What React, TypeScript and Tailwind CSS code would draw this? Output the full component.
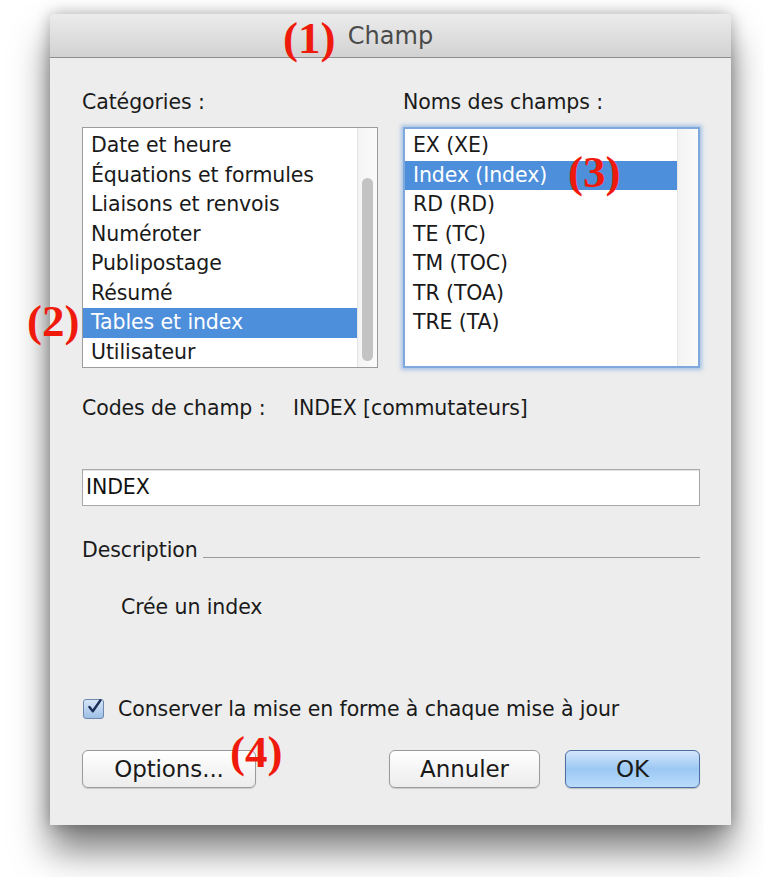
import React from "react";

const categories = [
  "Date et heure",
  "Équations et formules",
  "Liaisons et renvois",
  "Numéroter",
  "Publipostage",
  "Résumé",
  "Tables et index",
  "Utilisateur",
];

const fieldNames = [
  "EX (XE)",
  "Index (Index)",
  "RD (RD)",
  "TE (TC)",
  "TM (TOC)",
  "TR (TOA)",
  "TRE (TA)",
];

const font = { fontFamily: '"DejaVu Sans", "Liberation Sans", sans-serif' };

function Callout({ n, className }: { n: number; className: string }) {
  return (
    <span
      className={`absolute font-bold text-[#f01a0c] text-[45px] leading-none tracking-normal ${className}`}
      style={{ fontFamily: '"Liberation Serif", "DejaVu Serif", serif' }}
    >
      ({n})
    </span>
  );
}

function ListRow({ label, selected }: { label: string; selected: boolean }) {
  return (
    <div
      className={`h-[29.5px] pl-[8px] flex items-center whitespace-nowrap ${
        selected ? "bg-[#4e8fdb] text-white" : "text-[#1a1a1a]"
      }`}
    >
      {label}
    </div>
  );
}

const plainButton =
  "h-[38px] rounded-[6px] border border-[#9a9a9a] bg-gradient-to-b from-white to-[#ececec] shadow-[0_1px_1px_rgba(0,0,0,0.15)] text-[#1a1a1a] text-[23px]";

export default function App() {
  return (
    <div className="bg-white w-[764px] h-[877px] pt-[14px] pl-[50px] text-[20.5px] tracking-[-0.1px]" style={font}>
      <div className="relative w-[681px] h-[811px] bg-[#ededed] rounded-t-[5px] shadow-[0_26px_36px_rgba(0,0,0,0.5),0_0_16px_rgba(0,0,0,0.3)] flex flex-col">
        {/* title bar */}
        <div className="h-[44px] rounded-t-[5px] bg-gradient-to-b from-[#ececec] to-[#d2d2d2] border-b border-[#8e8e8e] flex items-center justify-center">
          <span className="text-[24px] text-[#4a4a4a] tracking-normal">Champ</span>
        </div>

        <div className="flex flex-col pl-[32px] pr-[31px]">
          {/* lists */}
          <div className="flex gap-[25px] mt-[32px]">
            <div className="w-[296px]">
              <div className="h-[24px] flex items-center text-[#1a1a1a]">Catégories :</div>
              <div className="mt-[13px] h-[241px] bg-white border border-[#9c9c9c] flex">
                <div className="flex-1 pt-[3px]">
                  {categories.map((c) => (
                    <ListRow key={c} label={c} selected={c === "Tables et index"} />
                  ))}
                </div>
                <div className="w-[20px] bg-gradient-to-r from-[#f4f4f4] to-[#fbfbfb] border-l border-[#e4e4e4] flex flex-col px-[4px] pt-[50px] pb-[6px]">
                  <div className="flex-1 rounded-full bg-[#c3c3c3]" />
                </div>
              </div>
            </div>

            <div className="w-[297px]">
              <div className="h-[24px] flex items-center text-[#1a1a1a]">Noms des champs :</div>
              <div className="mt-[13px] h-[241px] bg-white border-2 border-[#7fa9dc] shadow-[0_0_4px_2px_rgba(110,160,225,0.55)] flex">
                <div className="flex-1 pt-[2px]">
                  {fieldNames.map((f) => (
                    <ListRow key={f} label={f} selected={f === "Index (Index)"} />
                  ))}
                </div>
                <div className="w-[21px] bg-gradient-to-r from-[#f3f3f3] to-[#fafafa] border-l border-[#e6e6e6]" />
              </div>
            </div>
          </div>

          {/* field code */}
          <div className="flex items-center mt-[28px] h-[24px] text-[#1a1a1a]">
            <span className="w-[211px]">Codes de champ :</span>
            <span>INDEX [commutateurs]</span>
          </div>

          <div className="mt-[49px] h-[37px] bg-white border border-[#a9a9a9] shadow-[inset_0_1px_1px_rgba(0,0,0,0.12)] flex items-center pl-[3px] text-[#111]">
            INDEX
          </div>

          {/* description */}
          <div className="flex items-center gap-[5px] mt-[32px] h-[24px] text-[#1a1a1a]">
            <span>Description</span>
            <div className="flex-1 h-px bg-[#9a9a9a] mt-[14px]" />
          </div>
          <div className="mt-[33px] h-[24px] pl-[39px] flex items-center text-[#1a1a1a]">Crée un index</div>

          {/* checkbox */}
          <div className="flex items-center gap-[14px] mt-[78px] h-[24px]">
            <div className="w-[21px] h-[20px] rounded-[3px] border border-[#6d87ad] bg-gradient-to-b from-[#d6e6f8] to-[#9ebfe6] flex items-center justify-center ml-[1px]">
              <svg viewBox="0 0 20 20" className="w-[18px] h-[18px] -mt-[4px] ml-[2px]">
                <path d="M4 10 L8 15 L17 2" fill="none" stroke="#1b2f57" strokeWidth="2.8" strokeLinecap="round" strokeLinejoin="round" />
              </svg>
            </div>
            <span className="text-[#1a1a1a]">Conserver la mise en forme à chaque mise à jour</span>
          </div>

          {/* buttons */}
          <div className="flex items-center mt-[29px]">
            <button className={`w-[174px] ${plainButton}`}>Options...</button>
            <div className="flex-1" />
            <button className={`w-[151px] ${plainButton}`}>Annuler</button>
            <button className="ml-[25px] w-[135px] h-[38px] rounded-[6px] border border-[#4d6ea3] bg-gradient-to-b from-[#d3e6fb] via-[#9cc8f3] to-[#b9dcfb] shadow-[0_1px_1px_rgba(0,0,0,0.2)] text-[#1a1a1a] text-[23px]">
              OK
            </button>
          </div>
        </div>

        <Callout n={1} className="left-[233px] top-[2px]" />
        <Callout n={2} className="-left-[23px] top-[285px]" />
        <Callout n={3} className="left-[518px] top-[136px]" />
        <Callout n={4} className="left-[180px] top-[716px]" />
      </div>
    </div>
  );
}
